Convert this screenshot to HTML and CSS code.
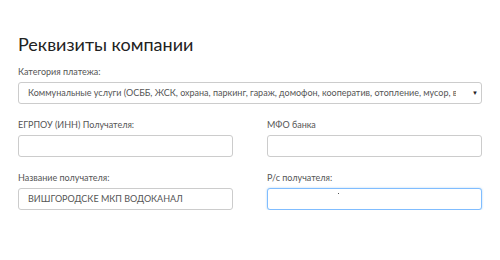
FILE: index.html
```html
<!DOCTYPE html>
<html>
<head>
    <meta charset="utf-8">
    <title>Реквизиты компании</title>
    <link rel="stylesheet" href="styles.css">
</head>
<body>
    <div class="container">
        <h2 class="title">Реквизиты компании</h2>

        <div class="field">
            <label>Категория платежа:</label>
            <div class="select">
                <span class="select-text">Коммунальные услуги (ОСББ, ЖСК, охрана, паркинг, гараж, домофон, кооператив, отопление, мусор, вывоз)</span>
                <span class="arrow">&#9660;</span>
            </div>
        </div>

        <div class="row">
            <div class="field">
                <label>ЕГРПОУ (ИНН) Получателя:</label>
                <div class="input"></div>
            </div>
            <div class="field">
                <label>МФО банка</label>
                <div class="input"></div>
            </div>
        </div>

        <div class="row">
            <div class="field">
                <label>Название получателя:</label>
                <div class="input">ВИШГОРОДСКЕ МКП ВОДОКАНАЛ</div>
            </div>
            <div class="field">
                <label>Р/с получателя:</label>
                <div class="input focus"><span class="dot"></span></div>
            </div>
        </div>
    </div>
</body>
</html>
```

FILE: styles.css
```css
* {
    margin: 0;
    padding: 0;
    box-sizing: border-box;
}

body {
    font-family: Lato, "Open Sans", sans-serif;
    color: #333;
    background: white;
}

.container {
    padding: 32px 18px 0 18px;
}

.title {
    font-size: 18px;
    font-weight: normal;
    color: #222;
    line-height: 24px;
    margin-bottom: 9px;
}

.field label {
    display: block;
    font-size: 9px;
    color: #555;
    line-height: 14px;
    margin-bottom: 3px;
}

.select,
.input {
    height: 22px;
    border: 1px solid #ccc;
    border-radius: 3px;
    background: white;
    font-size: 9px;
    line-height: 20px;
    padding-left: 9px;
    color: #555;
}

.select {
    display: flex;
    padding-right: 3px;
}

.select-text {
    flex: 1;
    white-space: nowrap;
    overflow: hidden;
    margin-right: 16px;
}

.arrow {
    font-size: 6px;
    color: #222;
}

.row {
    display: grid;
    grid-template-columns: 1fr 1fr;
    column-gap: 34px;
    margin-top: 14px;
}

.row + .row {
    margin-top: 14px;
}

.input.focus {
    border-color: #80bdff;
    box-shadow: 0 0 2px rgba(102, 175, 233, 0.6);
    position: relative;
}

.dot {
    position: absolute;
    left: 70px;
    top: 4px;
    width: 1px;
    height: 1px;
    background: #555;
}
```
